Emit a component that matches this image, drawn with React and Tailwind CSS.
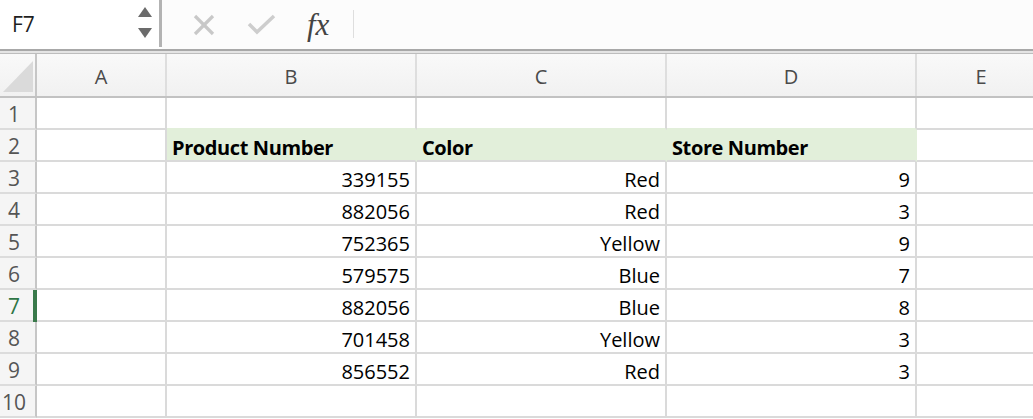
const columns = [
  { key: 'A', width: 'w-[130px]' },
  { key: 'B', width: 'w-[250px]' },
  { key: 'C', width: 'w-[250px]' },
  { key: 'D', width: 'w-[250px]' },
  { key: 'E', width: 'w-[130px]' },
];

const rows = [
  ['', '', '', '', ''],
  ['', 'Product Number', 'Color', 'Store Number', ''],
  ['', '339155', 'Red', '9', ''],
  ['', '882056', 'Red', '3', ''],
  ['', '752365', 'Yellow', '9', ''],
  ['', '579575', 'Blue', '7', ''],
  ['', '882056', 'Blue', '8', ''],
  ['', '701458', 'Yellow', '3', ''],
  ['', '856552', 'Red', '3', ''],
  ['', '', '', '', ''],
];

function FormulaBar() {
  return (
    <div className="flex h-[49px] bg-white">
      <div className="relative flex w-[159px] shrink-0 items-center pl-[12px]">
        <span className="text-[21px] text-[#1f1f1f]">F7</span>
        <svg className="absolute left-[137px] top-[6px]" width="16" height="34" viewBox="0 0 16 34">
          <polygon points="8,1 15,11 1,11" fill="#6b6b6b" />
          <polygon points="1,22 15,22 8,32" fill="#6b6b6b" />
        </svg>
      </div>
      <div className="h-[47px] w-[3px] shrink-0 bg-[#b3b3b3]" />
      <div className="relative flex-1 bg-[#fcfcfc]">
        <svg className="absolute left-[30px] top-[13px]" width="24" height="24" viewBox="0 0 24 24">
          <line x1="3" y1="3" x2="21" y2="21" stroke="#c8c8c8" strokeWidth="3.2" />
          <line x1="21" y1="3" x2="3" y2="21" stroke="#c8c8c8" strokeWidth="3.2" />
        </svg>
        <svg className="absolute left-[85px] top-[13px]" width="30" height="24" viewBox="0 0 30 24">
          <polyline points="2,11 10,19 27,3" fill="none" stroke="#cdcdcd" strokeWidth="3.5" />
        </svg>
        <span className="absolute left-[145px] top-[5px] font-['Liberation_Serif',serif] text-[31px] italic leading-[40px] text-[#444]">
          fx
        </span>
        <div className="absolute left-[191px] top-[10px] h-[28px] w-px bg-[#dedede]" />
      </div>
    </div>
  );
}

function ColumnHeader() {
  return (
    <div className="flex h-[44px] border-b-2 border-[#c2c2c2] bg-gradient-to-b from-[#f9f9f9] to-[#f1f1f1]">
      <div className="flex w-[37px] shrink-0 items-end border-r-2 border-[#c6c6c6] pb-[4px] pl-[3px]">
        <svg width="30" height="31" viewBox="0 0 30 31">
          <polygon points="30,0 30,31 0,31" fill="#dadada" />
        </svg>
      </div>
      {columns.map((c) => (
        <div
          key={c.key}
          className={`${c.width} flex shrink-0 items-center justify-center border-r-2 border-[#dedede] pt-[3px] text-[20px] text-[#4a4a4a]`}
        >
          {c.key}
        </div>
      ))}
    </div>
  );
}

function Row({ index, cells }) {
  const header = index === 1;
  const selected = index === 6;
  return (
    <div className="flex h-[32px]">
      <div className="relative flex w-[37px] shrink-0 items-center border-r-2 border-b-2 border-[#c6c6c6] border-b-[#dcdcdc] bg-[#f5f5f5] pt-[4px]">
        <span
          className={`w-[28px] text-center text-[21px] ${selected ? 'text-[#2e7545]' : 'text-[#555]'}`}
        >
          {index + 1}
        </span>
        {selected && <div className="absolute -right-[2px] top-0 h-[32px] w-[4px] bg-[#3a7a4b]" />}
      </div>
      {columns.map((c, i) => {
        const value = cells[i];
        const green = header && i >= 1 && i <= 3;
        const aboveGreen = index === 0 && i >= 1 && i <= 3;
        return (
          <div
            key={c.key}
            className={`${c.width} flex shrink-0 items-center border-b-2 border-r-2 px-[5px] pt-[5px] text-[20px] leading-none text-black ${
              green
                ? 'justify-start bg-[#e2efda] border-r-[#e2efda] border-b-[#dadada] font-bold tracking-[-0.4px]'
                : 'justify-end border-[#dadada]'
            } ${aboveGreen ? 'border-b-[#e2efda]' : ''}`}
          >
            {value}
          </div>
        );
      })}
    </div>
  );
}

export default function App() {
  return (
    <div className="h-[419px] w-[1033px] overflow-hidden bg-white font-['Open_Sans',sans-serif]">
      <FormulaBar />
      <div className="h-[2px] bg-[#a8a8a8]" />
      <div className="h-[2px] bg-[#e4e4e4]" />
      <div className="h-px bg-[#bdbdbd]" />
      <ColumnHeader />
      {rows.map((cells, i) => (
        <Row key={i} index={i} cells={cells} />
      ))}
    </div>
  );
}
